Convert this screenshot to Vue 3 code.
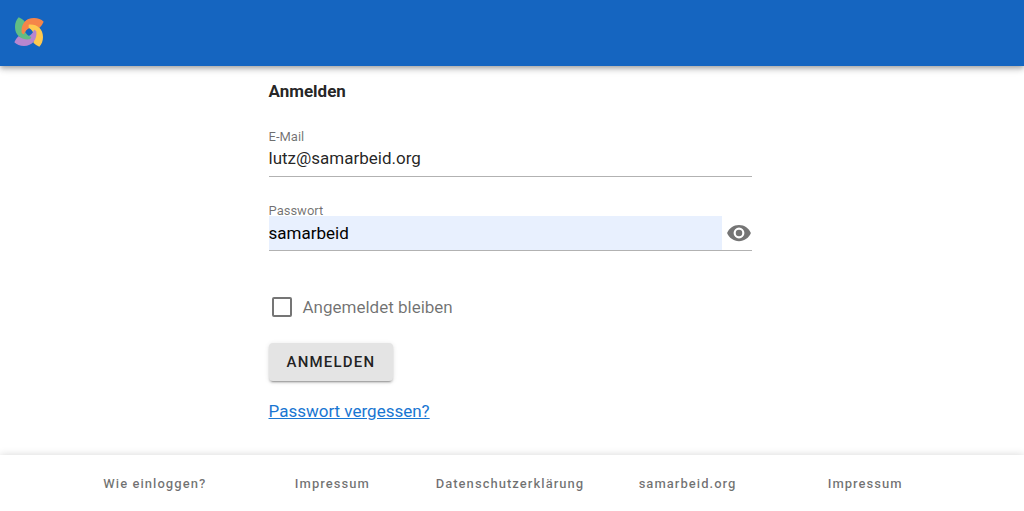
<template>
  <div class="page">
    <header class="app-bar">
      <a href="#" class="logo" aria-label="samarbeid">
        <svg viewBox="0 0 90 90" width="30" height="30" aria-hidden="true">
          <clipPath id="petal-start">
            <rect width="44" height="90" />
          </clipPath>
          <path
            v-for="petal in petals"
            :key="petal.color"
            :fill="petal.color"
            :transform="`rotate(${petal.angle} 45 45)`"
            :d="petalPath"
          />
          <!-- First petal again, so that it lies over the last one -->
          <path :fill="petals[0].color" :d="petalPath" clip-path="url(#petal-start)" />
        </svg>
      </a>
    </header>

    <main class="content">
      <form class="login" @submit.prevent>
        <h1>Anmelden</h1>

        <div class="field">
          <label for="email">E-Mail</label>
          <div class="field-row">
            <input id="email" v-model="email" type="email">
          </div>
        </div>

        <div class="field">
          <label for="password">Passwort</label>
          <div class="field-row">
            <input
              id="password"
              v-model="password"
              class="autofilled"
              :type="showPassword ? 'text' : 'password'"
            >
            <button
              type="button"
              class="toggle"
              aria-label="Passwort anzeigen"
              @click="showPassword = !showPassword"
            >
              <svg viewBox="0 0 24 24" width="26" height="26" aria-hidden="true">
                <path d="M12 9a3 3 0 0 0-3 3 3 3 0 0 0 3 3 3 3 0 0 0 3-3 3 3 0 0 0-3-3m0 8a5 5 0 0 1-5-5 5 5 0 0 1 5-5 5 5 0 0 1 5 5 5 5 0 0 1-5 5m0-12.5C7 4.5 2.73 7.61 1 12c1.73 4.39 6 7.5 11 7.5s9.27-3.11 11-7.5c-1.73-4.39-6-7.5-11-7.5z" />
              </svg>
            </button>
          </div>
        </div>

        <label class="remember">
          <input v-model="remember" type="checkbox">
          <span>Angemeldet bleiben</span>
        </label>

        <button type="submit" class="submit">ANMELDEN</button>

        <a href="#" class="forgot">Passwort vergessen?</a>
      </form>
    </main>

    <footer class="footer">
      <nav>
        <a v-for="(link, index) in links" :key="index" href="#">{{ link }}</a>
      </nav>
    </footer>
  </div>
</template>

<script setup>
import {ref} from 'vue';

const email = ref('lutz@samarbeid.org');
const password = ref('samarbeid');
const showPassword = ref(true);
const remember = ref(false);

const petalPath = 'M23 47C20 22 35 3 60 3C72 3 82 7 89 14C86 21 82 27 77 32C66 28 55 28 47 32C39 36 33 42 30 52C27 51 24 49 23 47Z';

const petals = [
  {color: '#f58549', angle: 0},
  {color: '#ffc94f', angle: 90},
  {color: '#b886cf', angle: 180},
  {color: '#62bd84', angle: 270},
];

const links = [
  'Wie einloggen?',
  'Impressum',
  'Datenschutzerklärung',
  'samarbeid.org',
  'Impressum',
];
</script>

<style>
body {
  margin: 0;
  background: #fff;
}
</style>

<style scoped>
.page {
  display: flex;
  flex-direction: column;
  min-height: 100vh;
  font-family: Roboto, "Liberation Sans", sans-serif;
  font-size: 17px;
  line-height: 24px;
  color: rgba(0, 0, 0, 0.87);
}

.page * {
  box-sizing: border-box;
}

.app-bar {
  display: flex;
  align-items: center;
  height: 66px;
  padding: 0 14px 2px;
  background: #1565c0;
  box-shadow: 0 2px 4px -1px rgba(0, 0, 0, 0.2), 0 4px 5px rgba(0, 0, 0, 0.14), 0 1px 10px rgba(0, 0, 0, 0.12);
}

.logo,
.logo svg {
  display: block;
}

.content {
  flex: 1;
  padding: 13px 20px 28px 16px;
}

.login {
  display: flex;
  flex-direction: column;
  align-items: flex-start;
  max-width: 483px;
  margin: 0 auto;
}

h1 {
  margin: 0 0 25px;
  font-size: 17px;
  font-weight: 700;
  line-height: 24px;
}

.field {
  width: 100%;
  margin-bottom: 25px;
}

.field label {
  display: block;
  height: 14px;
  font-size: 13px;
  line-height: 18px;
  color: rgba(0, 0, 0, 0.56);
}

.field-row {
  display: flex;
  align-items: center;
  gap: 4px;
  border-bottom: 1px solid rgba(0, 0, 0, 0.3);
}

.field input {
  flex: 1;
  min-width: 0;
  height: 34px;
  padding: 0 0 2px;
  border: 0;
  outline: 0;
  background: none;
  font: inherit;
  color: inherit;
}

.field .autofilled {
  padding: 0;
  background: #e8f0fe;
  color: #000;
}

.toggle {
  display: flex;
  padding: 0;
  border: 0;
  background: none;
  cursor: pointer;
}

.toggle svg {
  fill: #757575;
}

.remember {
  display: flex;
  align-items: center;
  gap: 11px;
  margin: 19px 0 24px 3px;
  color: rgba(0, 0, 0, 0.56);
}

.remember input {
  appearance: none;
  width: 20px;
  height: 20px;
  margin: 0;
  border: 2px solid #757575;
  border-radius: 2px;
}

.remember input:checked {
  background: #1976d2;
}

.submit {
  height: 38px;
  padding: 0 18px;
  border: 0;
  border-radius: 4px;
  background: #e4e4e4;
  color: rgba(0, 0, 0, 0.87);
  font-family: inherit;
  font-size: 15px;
  font-weight: 500;
  letter-spacing: 0.08em;
  box-shadow: 0 3px 1px -2px rgba(0, 0, 0, 0.2), 0 2px 2px rgba(0, 0, 0, 0.14), 0 1px 5px rgba(0, 0, 0, 0.12);
  cursor: pointer;
}

.forgot {
  margin-top: 18px;
  color: #1976d2;
}

.footer {
  padding: 18px 20px 16px 16px;
  background: #fff;
  box-shadow: 0 0 8px rgba(0, 0, 0, 0.16);
}

.footer nav {
  display: grid;
  grid-template-columns: repeat(5, 1fr);
  max-width: 888px;
  margin: 0 auto;
}

.footer a {
  font-size: 13px;
  font-weight: 500;
  line-height: 22px;
  letter-spacing: 0.08em;
  text-align: center;
  text-decoration: none;
  color: rgba(0, 0, 0, 0.56);
}
</style>
